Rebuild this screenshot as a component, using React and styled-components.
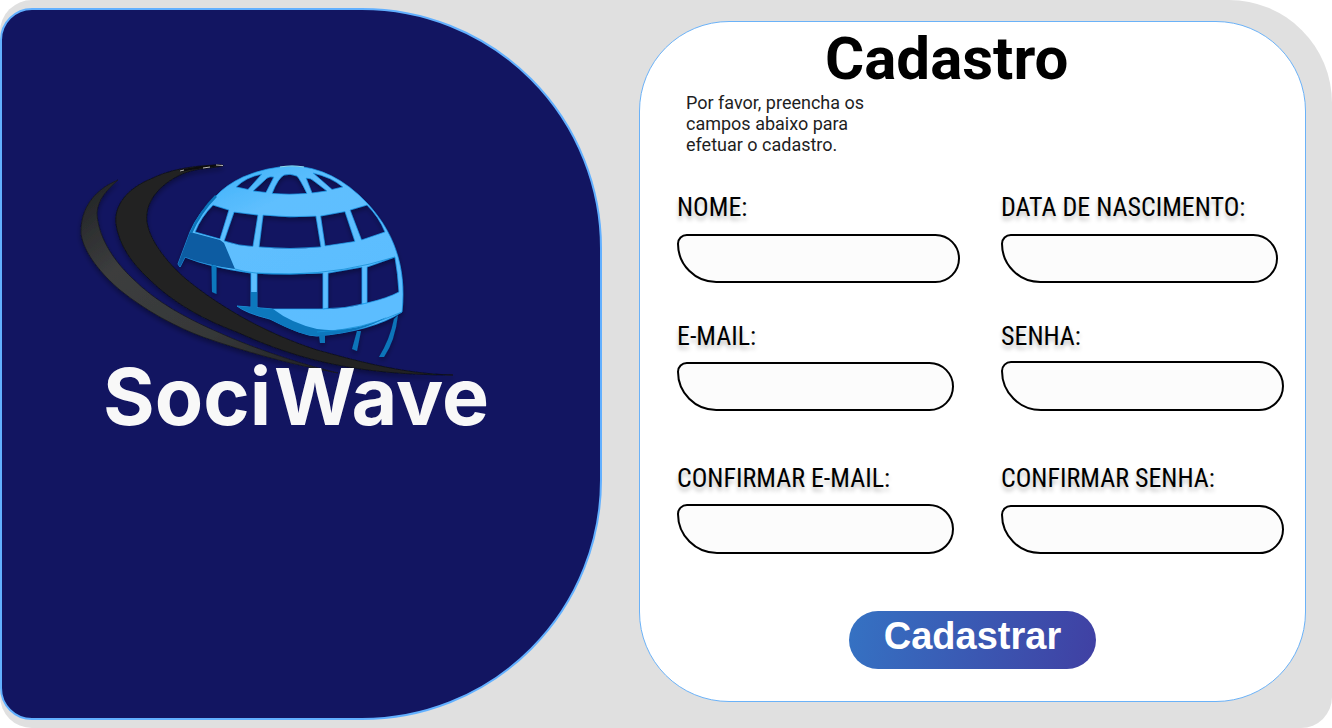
import React from "react";
import styled, { createGlobalStyle } from "styled-components";

const GlobalStyle = createGlobalStyle`
  * { box-sizing: border-box; }
  body { margin: 0; background: #fff; overflow: hidden; }
`;

const Page = styled.main`
  display: flex;
  align-items: flex-start;
  width: 1332px;
  height: 728px;
  padding-top: 8px;
  background: #e0e0e0;
  border-radius: 32px 103px 31px 32px;
`;

const BrandPanel = styled.section`
  display: flex;
  flex-direction: column;
  width: 602px;
  height: 712px;
  padding: 140px 0 0 68px;
  background: #121561;
  border: 2px solid #62b0ff;
  border-radius: 32px 240px 240px 32px;
`;

const Logo = styled.svg`
  display: block;
  flex: none;
  width: 400px;
  height: 240px;
`;

const BrandName = styled.h1`
  margin: -42px 0 0 33px;
  font: 700 79px/96px Inter, sans-serif;
  color: #f8f8f8;
  z-index: 1;
  white-space: nowrap;
`;

const BrandSuffix = styled.span`
  margin-left: 3px;
`;

const Card = styled.section`
  display: flex;
  flex-direction: column;
  width: 667px;
  height: 681px;
  margin: 13px 0 0 37px;
  padding-left: 37px;
  background: #fff;
  border: 1px solid #6bb2f8;
  border-radius: 90px;
`;

const Title = styled.h2`
  margin: 2px 0 -2px 148px;
  font: 700 60px/70px Roboto, sans-serif;
  color: #000;
`;

const Intro = styled.p`
  width: 200px;
  margin: 0 0 0 9px;
  font: 400 18px/21px Roboto, sans-serif;
  color: #1e1e1e;
`;

const Form = styled.form`
  display: flex;
  flex-direction: column;
`;

const Fields = styled.div`
  display: grid;
  grid-template-columns: 324px 290px;
  grid-template-rows: 129px 142px 91px;
  margin-top: 37px;
`;

const Field = styled.label`
  display: flex;
  flex-direction: column;
  align-items: flex-start;
`;

const LabelText = styled.span`
  height: 30px;
  margin-bottom: ${(p) => p.$gap}px;
  font: 400 26px/30px "Roboto Condensed", Roboto, sans-serif;
  font-stretch: 75%;
  color: #000;
  text-shadow: 0 4px 4px rgba(0, 0, 0, 0.25);
  white-space: nowrap;
`;

const Input = styled.input`
  width: ${(p) => p.$width}px;
  height: ${(p) => p.$height}px;
  padding: 0 24px;
  background: #fcfcfc;
  border: 2px solid #000;
  border-radius: 10px 25px 25px 40px;
  outline: none;
`;

const Submit = styled.button`
  width: 247px;
  height: 58px;
  margin: 57px 0 0 172px;
  padding: 0 0 9px;
  border: 0;
  border-radius: 29px;
  background: linear-gradient(100deg, #3572c3, #4040a3);
  color: #fff;
  font: 700 38px/44px "Liberation Sans", Arial, sans-serif;
`;

const fields = [
  { label: "NOME:", type: "text", width: 283, height: 49, gap: 12 },
  { label: "DATA DE NASCIMENTO:", type: "text", width: 277, height: 49, gap: 12 },
  { label: "E-MAIL:", type: "email", width: 277, height: 49, gap: 11 },
  { label: "SENHA:", type: "password", width: 283, height: 50, gap: 10 },
  { label: "CONFIRMAR E-MAIL:", type: "email", width: 277, height: 50, gap: 11 },
  { label: "CONFIRMAR SENHA:", type: "password", width: 283, height: 49, gap: 12 },
];

function GlobeLogo() {
  return (
    <Logo viewBox="70 150 400 240" aria-hidden="true">
      <defs>
        <linearGradient id="gray" x1="0" y1="0" x2="1" y2="1">
          <stop offset="0" stopColor="#202224" />
          <stop offset="0.3" stopColor="#3c3d3e" />
          <stop offset="0.65" stopColor="#363838" />
          <stop offset="1" stopColor="#202124" />
        </linearGradient>
        <linearGradient id="sky" x1="0" y1="0" x2="0.6" y2="1">
          <stop offset="0" stopColor="#36aef8" />
          <stop offset="0.35" stopColor="#5fbffe" />
          <stop offset="1" stopColor="#5bbdff" />
        </linearGradient>
        <filter id="shadow" x="-10%" y="-10%" width="120%" height="125%">
          <feDropShadow dx="0" dy="3" stdDeviation="2.5" floodColor="#000" floodOpacity="0.35" />
        </filter>
      </defs>

      <g filter="url(#shadow)">
        <path fill="url(#gray)" stroke="#15171d" strokeWidth="0.7" d="M118 180C96 189 80 207 81 234C84 253 101 274 120 290C146 311 176 327 203 337C246 352 289 364 338 373C296 363 246 345 220 333C188 319 157 303 132 278C111 258 98 235 97 213C98 199 107 190 118 180Z" />
        <path fill="#222323" stroke="#101116" strokeWidth="0.8" d="M223 165C191 165 167 171 153 178C125 189 114 207 116 224C119 245 132 263 148 278C174 304 207 321 237 332C286 354 344 375 453 375C401 374 350 359 317 350C270 335 224 310 187 280C158 255 144 229 147 213C149 197 163 183 180 175C195 168 207 169 223 166Z" />
        <path d="M180 171Q198 167 221 165" fill="none" stroke="#09090d" strokeWidth="2.2" />
        <path d="M203 168L210 167M216 165L223 165.500M180 171L184 170" fill="none" stroke="#bbb8b5" strokeWidth="1" />
      </g>

      <g filter="url(#shadow)">
        <path
          fill="url(#sky)"
          fillRule="evenodd"
          stroke="#1ea2ef"
          strokeWidth="0.7"
          strokeLinejoin="round"
          d="M292 166Q266 167 243 177Q226 185 216 196Q198 213 190 232L178 264L180 267L185 257Q209 267 251 273V308H257V273Q290 275 323 273V309L328 308V273L362 267V304L367 303V267L395 257Q398 274 399 292Q388 298 367 303Q345 309 322 309L273 309L237 306Q246 313 270 319Q303 336 317 336Q372 331 402 312C407 264 392 230 367 203Q333 167 292 166Z
          M236 187Q246 177 262 174L248 189.500Z
          M253 191L267 178Q270 176 274 177L266 192.500Z
          M272 193.500Q278 178 284 175Q290 173 297 176Q300 179 307 193.500Q289 195 272 193.500Z
          M306 178Q311 178 314 181L327 191L312 193Z
          M313 173Q331 177 343 187L332 189.500Z
          M213 205L229 210L220 239L195 232Q201 217 213 205Z
          M234 212L258 215L253 246.5Q239 246 224 241Z
          M263 215Q290 218 316 216L321 247Q290 250 259 247Z
          M320.5 216L345 211.5L355 241.5L325 246Z
          M350 210L367 205Q379 217 385 232L361.5 240Z"
        />
        <path fill="#075ca2" d="M190 232L220 240L224 243L235 269Q205 265 185 257L180 267L178 264Z" />
        <path fill="none" stroke="#0874ba" strokeWidth="2.5" d="M216 196Q200 212 191 233" />
        <path fill="#0b78bd" d="M211.500 265L216.500 266V294L212 292ZM251 292H257V309H251ZM237 306L273 309Q291 323 317 329Q350 334 387 317Q361 333 317 336Q301 336 270 319Q246 313 237 306Z" />
        <path fill="#0b75b9" d="M319 335H325V343H320ZM357 331H361L357 351L352 349ZM394 319L398 315Q395 341 384 357L379 357Q390 339 394 319Z" />
        <path fill="none" stroke="#168fd5" strokeWidth="0.8" d="M235 269Q253 275 290 274Q345 273 395 257M317 332Q363 330 402 312" />
        <path fill="none" stroke="#91d8e9" strokeWidth="1.2" d="M280 167Q292 165 304 167" />
      </g>
    </Logo>
  );
}

export default function App() {
  return (
    <>
      <GlobalStyle />
      <Page>
        <BrandPanel>
          <GlobeLogo />
          <BrandName>
            Soci<BrandSuffix>Wave</BrandSuffix>
          </BrandName>
        </BrandPanel>
        <Card>
          <Title>Cadastro</Title>
          <Intro>Por favor, preencha os campos abaixo para efetuar o cadastro.</Intro>
          <Form onSubmit={(e) => e.preventDefault()}>
            <Fields>
              {fields.map((f) => (
                <Field key={f.label}>
                  <LabelText $gap={f.gap}>{f.label}</LabelText>
                  <Input type={f.type} $width={f.width} $height={f.height} />
                </Field>
              ))}
            </Fields>
            <Submit type="submit">Cadastrar</Submit>
          </Form>
        </Card>
      </Page>
    </>
  );
}
